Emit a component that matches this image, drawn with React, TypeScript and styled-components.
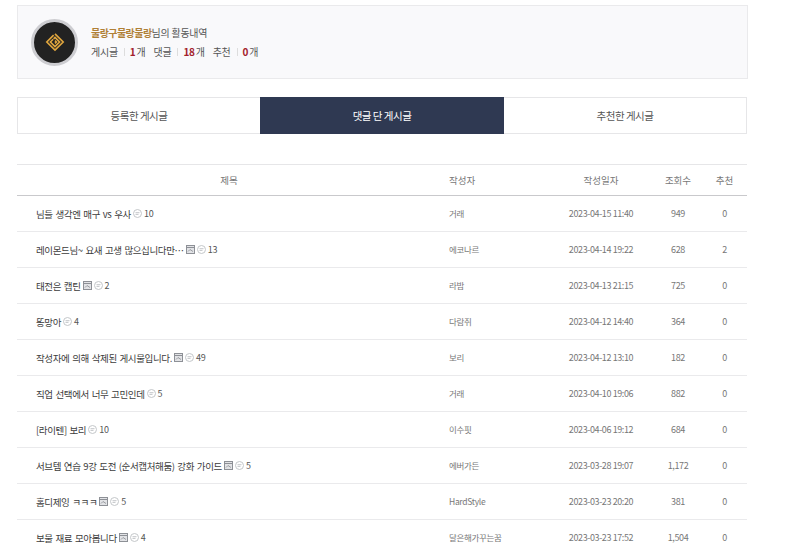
import styled, { createGlobalStyle } from "styled-components";

const GlobalStyle = createGlobalStyle`
  html, body {
    margin: 0;
    padding: 0;
    background: #fff;
    overflow: hidden;
    font-family: "Noto Sans CJK KR", "Noto Sans", sans-serif;
  }
`;

const Page = styled.div`
  width: 731px;
  height: 544px;
  padding: 5px 0 0 17px;
  overflow: hidden;
`;

const Summary = styled.section`
  box-sizing: border-box;
  width: 731px;
  height: 74px;
  display: flex;
  align-items: center;
  gap: 13px;
  padding: 0 0 0 13px;
  background: #f9f9fb;
  border: 1px solid #eaeaec;
`;

const Avatar = styled.div`
  box-sizing: border-box;
  width: 47px;
  height: 47px;
  border-radius: 50%;
  background: #222;
  border: 3px solid #cdcdd1;
  display: flex;
  align-items: center;
  justify-content: center;
`;

const SummaryText = styled.div`
  display: flex;
  flex-direction: column;
  gap: 5px;
  margin-top: 1px;
  font-size: 10px;
  line-height: 14px;
  color: #555;
  letter-spacing: -0.25px;
`;

const Nick = styled.strong`
  color: #b08036;
  font-weight: 700;
  letter-spacing: -0.55px;
`;

const Stats = styled.div`
  display: flex;
  align-items: center;
`;

const StatLabel = styled.span`
  margin-right: 6px;
  &:not(:first-child) {
    margin-left: 8px;
  }
`;

const Sep = styled.i`
  width: 1px;
  height: 8px;
  background: #ddd;
  margin-right: 5px;
`;

const Count = styled.b`
  color: #a3212c;
  font-weight: 700;
  margin-right: 1px;
`;

const Tabs = styled.nav`
  display: grid;
  grid-template-columns: 242px 244px 242px;
  width: 730px;
  height: 37px;
  margin-top: 18px;
  box-sizing: border-box;
  border: 1px solid #e6e6e8;
`;

const Tab = styled.div<{ $active?: boolean }>`
  display: flex;
  align-items: center;
  justify-content: center;
  font-size: 10.5px;
  letter-spacing: -0.5px;
  margin: ${(p) => (p.$active ? "-1px 0" : "0")};
  color: ${(p) => (p.$active ? "#fff" : "#555")};
  background: ${(p) => (p.$active ? "#2f3952" : "#fff")};
`;

const Board = styled.table`
  width: 730px;
  margin-top: 30px;
  border-collapse: collapse;
  table-layout: fixed;
`;

const HeadCell = styled.th<{ $left?: boolean }>`
  height: 30px;
  padding: 0 0 0 ${(p) => (p.$left ? "8px" : "0")};
  text-align: ${(p) => (p.$left ? "left" : "center")};
  font-size: 9.5px;
  font-weight: 400;
  color: #777;
  border-top: 1px solid #e6e6e8;
  border-bottom: 1px solid #c9c9cc;
`;

const Row = styled.tr`
  height: 36px;
  border-bottom: 1px solid #eaeaec;
`;

const TitleCell = styled.td`
  padding: 0 0 0 19px;
  font-size: 9.5px;
  letter-spacing: -0.38px;
  word-spacing: 1px;
  color: #3c3c3c;
  white-space: nowrap;
`;

const TitleInner = styled.div`
  display: flex;
  align-items: center;
  gap: 2px;
`;

const Replies = styled.span`
  font-size: 9px;
  letter-spacing: -0.2px;
  color: #555;
`;

const AuthorCell = styled.td`
  padding: 0 0 2px 8px;
  font-size: 8.5px;
  letter-spacing: -0.3px;
  color: #777;
  white-space: nowrap;
`;

const MetaCell = styled.td`
  padding: 0;
  text-align: center;
  font-size: 9px;
  letter-spacing: -0.4px;
  color: #777;
  white-space: nowrap;
`;

const Logo = () => (
  <svg width="20" height="20" viewBox="0 0 22 22" fill="none" stroke="#e0a63e" strokeWidth="1.8">
    <path d="M11 2 L20 11 L11 20 L2 11 L9.5 3.5" />
    <path d="M9.5 7.5 L11 6 L16 11 L11 16 L6 11 L9 8" />
    <path d="M11 9.5 L12.5 11 L11 12.5" />
  </svg>
);

const ImageIcon = () => (
  <svg width="9" height="9" viewBox="0 0 9 9">
    <rect x="0.5" y="0.5" width="8" height="8" fill="#e2e3e6" stroke="#8d9096" />
    <path d="M1 2.5 H8" stroke="#8d9096" />
    <path d="M2 6.5 L4 4.5 L7 6.5" fill="none" stroke="#9a9da2" />
  </svg>
);

const CommentIcon = () => (
  <svg width="9" height="9" viewBox="0 0 9 9" fill="none" stroke="#c3c6c9">
    <circle cx="4.5" cy="4.5" r="4" />
    <path d="M2.5 3.7 H6.5 M2.5 5.4 H5.5" />
  </svg>
);

type Post = {
  title: string;
  hasImage: boolean;
  replies: number;
  author: string;
  date: string;
  views: string;
  likes: number;
};

const posts: Post[] = [
  { title: "님들 생각엔 매구 vs 우사", hasImage: false, replies: 10, author: "거래", date: "2023-04-15 11:40", views: "949", likes: 0 },
  { title: "레이몬드님~ 요새 고생 많으십니다만⋯", hasImage: true, replies: 13, author: "에코나르", date: "2023-04-14 19:22", views: "628", likes: 2 },
  { title: "태전은 캡틴", hasImage: true, replies: 2, author: "라밤", date: "2023-04-13 21:15", views: "725", likes: 0 },
  { title: "똥망아", hasImage: false, replies: 4, author: "다람쥐", date: "2023-04-12 14:40", views: "364", likes: 0 },
  { title: "작성자에 의해 삭제된 게시물입니다.", hasImage: true, replies: 49, author: "보리", date: "2023-04-12 13:10", views: "182", likes: 0 },
  { title: "직업 선택에서 너무 고민인데", hasImage: false, replies: 5, author: "거래", date: "2023-04-10 19:06", views: "882", likes: 0 },
  { title: "[라이텐] 보리", hasImage: false, replies: 10, author: "이수핏", date: "2023-04-06 19:12", views: "684", likes: 0 },
  { title: "서브템 연습 9강 도전 (순서캡처해둠) 강화 가이드", hasImage: true, replies: 5, author: "에버가든", date: "2023-03-28 19:07", views: "1,172", likes: 0 },
  { title: "홈디제잉 ㅋㅋㅋ", hasImage: true, replies: 5, author: "HardStyle", date: "2023-03-23 20:20", views: "381", likes: 0 },
  { title: "보물 재료 모아봅니다", hasImage: true, replies: 4, author: "달은해가꾸는꿈", date: "2023-03-23 17:52", views: "1,504", likes: 0 },
];

const App = () => {
  return (
    <Page>
      <GlobalStyle />
      <Summary>
        <Avatar>
          <Logo />
        </Avatar>
        <SummaryText>
          <div>
            <Nick>물랑구물랑물랑</Nick>님의 활동내역
          </div>
          <Stats>
            <StatLabel>게시글</StatLabel>
            <Sep />
            <Count>1</Count>개
            <StatLabel>댓글</StatLabel>
            <Sep />
            <Count>18</Count>개
            <StatLabel>추천</StatLabel>
            <Sep />
            <Count>0</Count>개
          </Stats>
        </SummaryText>
      </Summary>

      <Tabs>
        <Tab>등록한 게시글</Tab>
        <Tab $active>댓글 단 게시글</Tab>
        <Tab>추천한 게시글</Tab>
      </Tabs>

      <Board>
        <colgroup>
          <col width="424" />
          <col width="107" />
          <col width="106" />
          <col width="48" />
          <col width="45" />
        </colgroup>
        <thead>
          <tr>
            <HeadCell>제목</HeadCell>
            <HeadCell $left>작성자</HeadCell>
            <HeadCell>작성일자</HeadCell>
            <HeadCell>조회수</HeadCell>
            <HeadCell>추천</HeadCell>
          </tr>
        </thead>
        <tbody>
          {posts.map((post) => (
            <Row key={post.date}>
              <TitleCell>
                <TitleInner>
                  {post.title}
                  {post.hasImage && <ImageIcon />}
                  <CommentIcon />
                  <Replies>{post.replies}</Replies>
                </TitleInner>
              </TitleCell>
              <AuthorCell>{post.author}</AuthorCell>
              <MetaCell>{post.date}</MetaCell>
              <MetaCell>{post.views}</MetaCell>
              <MetaCell>{post.likes}</MetaCell>
            </Row>
          ))}
        </tbody>
      </Board>
    </Page>
  );
};

export default App;
